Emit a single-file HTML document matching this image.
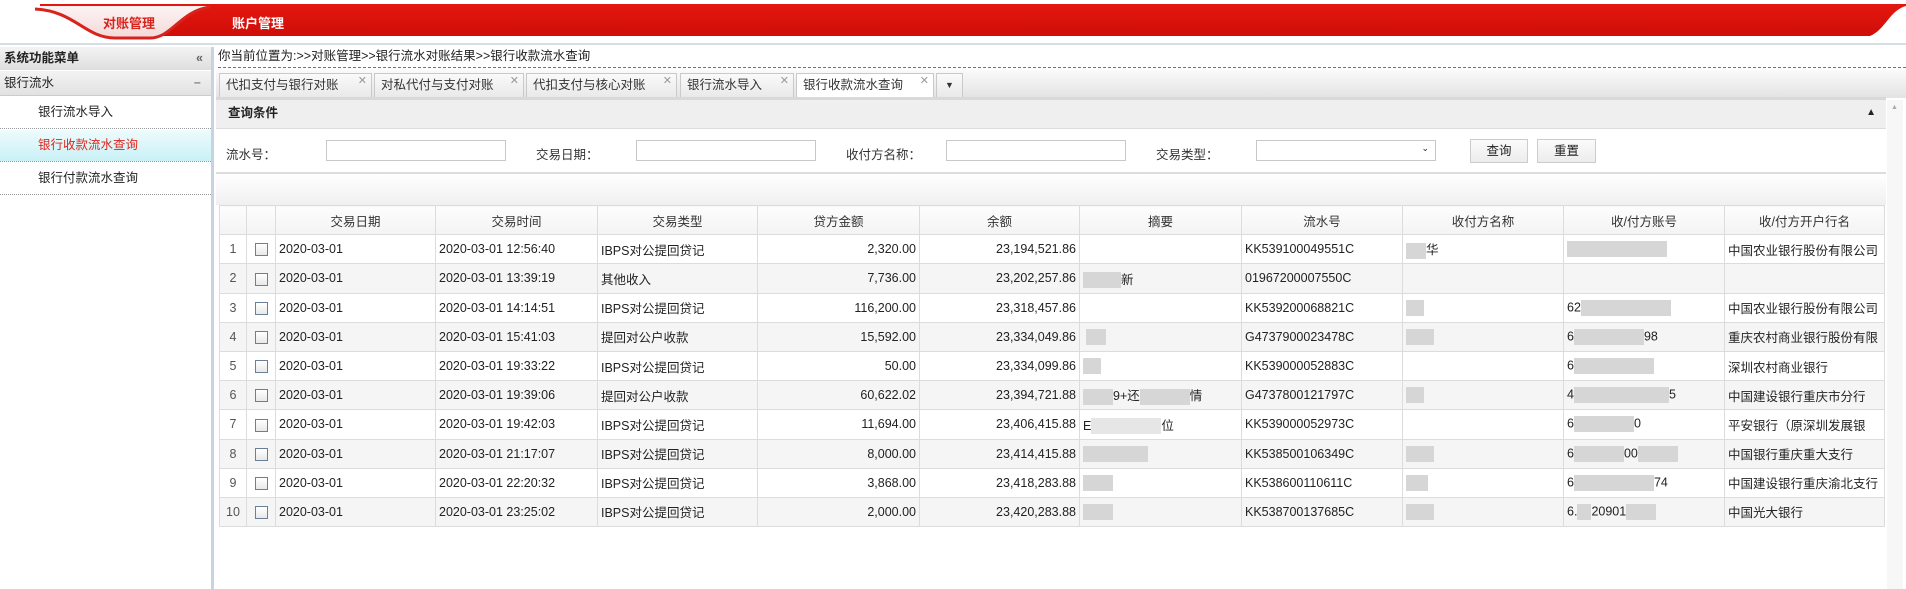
<!DOCTYPE html>
<html><head><meta charset="utf-8"><style>
*{margin:0;padding:0;box-sizing:border-box}
body{width:1906px;height:589px;overflow:hidden;background:#fff;font-family:"Liberation Sans","Noto Sans CJK SC",sans-serif;font-size:13px;color:#222;position:relative}
.a{position:absolute}
.tab{position:absolute;top:0;height:24px;border:1px solid #c9c9c9;border-bottom:none;background:linear-gradient(#fafafa,#e9e9e9);font-size:12.5px;line-height:22px;padding-left:6px;color:#333}
.tab .x{position:absolute;right:4px;top:-4px;color:#999;font-size:11px}
.inp{position:absolute;top:140px;height:21px;border:1px solid #c8c8c8;background:#fff}
.lbl{position:absolute;top:144px;font-size:12.5px;color:#333}
.btn{position:absolute;top:139px;height:24px;border:1px solid #ccc;background:linear-gradient(#fbfbfb,#ececec);font-size:12.5px;text-align:center;line-height:22px}
table{position:absolute;left:219px;top:205px;border-collapse:collapse;table-layout:fixed;width:1665px}
td,th{border:1px solid #dcdcdc;height:29.2px;font-size:12.5px;padding:0 3px;white-space:nowrap;overflow:hidden}
th{font-weight:normal;background:linear-gradient(#fdfdfd,#f3f3f3);text-align:center;color:#333}
tr:nth-child(odd) td{background:#f5f5f5}
td.n{text-align:center;color:#555}
td.r{text-align:right}
.cb{display:inline-block;width:13px;height:13px;border:1px solid #6b7f99;background:linear-gradient(#fff,#e8e8e8);vertical-align:middle}
.bl{display:inline-block;height:16px;background:#d6d6d6;vertical-align:middle}
</style></head><body>
<svg class="a" style="left:0;top:0" width="1906" height="46">
<defs><linearGradient id="g" x1="0" y1="0" x2="0" y2="1"><stop offset="0" stop-color="#e3180f"/><stop offset="1" stop-color="#d00d08"/></linearGradient>
<linearGradient id="t" x1="0" y1="0" x2="0" y2="1"><stop offset="0" stop-color="#fdf3f3"/><stop offset="1" stop-color="#f3d9d9"/></linearGradient></defs>
<path d="M30 4 H1906 V6 C1890 10 1885 30 1870 36 H150 Z" fill="url(#g)"/>
<path d="M0 0 H40 V10 C75 10 85 38 115 38 H150 V46 H0 Z" fill="#fff"/>
<path d="M38 10 C75 12 85 38 115 38 H150 C172 38 180 12 210 8 L210 6 H40 Z" fill="url(#t)"/>
<path d="M35 9 C75 11 85 38 115 38 H150 C172 38 180 11 210 7" stroke="#d8231d" stroke-width="3" fill="none"/>
</svg>
<div class="a" style="left:103px;top:13px;font-size:13px;font-weight:bold;color:#d9221c">对账管理</div>
<div class="a" style="left:232px;top:13px;font-size:13px;font-weight:bold;color:#fff">账户管理</div>
<div class="a" style="left:0;top:43px;width:1906px;height:2px;background:#d5dde5"></div>
<!-- sidebar -->
<div class="a" style="left:0;top:47px;width:214px;height:542px;border-right:3px solid #c7d3e0;background:#fff"></div>
<div class="a" style="left:0;top:47px;width:211px;height:23px;background:linear-gradient(#f3f3f3,#dedede);font-weight:bold;font-size:12.5px;line-height:23px;padding-left:4px">系统功能菜单<span style="position:absolute;right:8px;color:#666">«</span></div>
<div class="a" style="left:0;top:71px;width:211px;height:25px;background:linear-gradient(#f3f3f3,#e2e2e2);font-size:12.5px;line-height:25px;padding-left:4px;border-bottom:1px solid #ccc">银行流水<span style="position:absolute;right:10px;color:#555">−</span></div>
<div class="a" style="left:0;top:97px;width:211px;height:32px;border-bottom:1px dotted #999;line-height:31px;padding-left:38px;font-size:12.5px">银行流水导入</div>
<div class="a" style="left:0;top:130px;width:211px;height:32px;border-bottom:1px dotted #999;line-height:31px;padding-left:38px;font-size:12.5px;color:#e0261f;background:linear-gradient(#eefbfd,#c9f1f6)">银行收款流水查询</div>
<div class="a" style="left:0;top:163px;width:211px;height:32px;border-bottom:1px dotted #999;line-height:31px;padding-left:38px;font-size:12.5px">银行付款流水查询</div>
<!-- main -->
<div class="a" style="left:218px;top:47px;font-size:12.5px;line-height:18px">你当前位置为:&gt;&gt;对账管理&gt;&gt;银行流水对账结果&gt;&gt;银行收款流水查询</div>
<div class="a" style="left:218px;top:67px;width:1688px;border-top:1px dashed #557a99"></div>
<div class="a" style="left:216px;top:70px;width:1690px;height:28px;background:linear-gradient(#fafafa,#e3e3e3)"></div>
<div class="tab" style="left:219px;width:153px;top:73px">代扣支付与银行对账<span class="x">✕</span></div>
<div class="tab" style="left:374px;width:150px;top:73px">对私代付与支付对账<span class="x">✕</span></div>
<div class="tab" style="left:526px;width:151px;top:73px">代扣支付与核心对账<span class="x">✕</span></div>
<div class="tab" style="left:680px;width:114px;top:73px">银行流水导入<span class="x">✕</span></div>
<div class="tab" style="left:796px;width:138px;top:73px;background:#fff">银行收款流水查询<span class="x">✕</span></div>
<div class="tab" style="left:936px;width:27px;top:73px;font-size:9px;text-align:center;padding:0">▼</div>
<div class="a" style="left:216px;top:97px;width:1670px;height:3px;background:#d9d9d9"></div>
<div class="a" style="left:216px;top:100px;width:1670px;height:29px;background:#efefef;border-bottom:1px solid #ddd;font-weight:bold;font-size:12.5px;line-height:26px;padding-left:12px">查询条件<span style="position:absolute;right:10px;font-size:10px">▲</span></div>
<div class="a" style="left:1887px;top:100px;width:16px;height:489px;background:#f7f7f7"><span style="position:absolute;left:4px;top:4px;font-size:7px;color:#aaa">▲</span></div>
<div class="lbl" style="left:226px">流水号：</div><div class="inp" style="left:326px;width:180px"></div>
<div class="lbl" style="left:536px">交易日期：</div><div class="inp" style="left:636px;width:180px"></div>
<div class="lbl" style="left:846px">收付方名称：</div><div class="inp" style="left:946px;width:180px"></div>
<div class="lbl" style="left:1156px">交易类型：</div><div class="inp" style="left:1256px;width:180px"><span style="position:absolute;right:6px;top:2px;font-size:9px">⌄</span></div>
<div class="btn" style="left:1470px;width:58px">查询</div>
<div class="btn" style="left:1537px;width:59px">重置</div>
<div class="a" style="left:216px;top:172px;width:1670px;height:2px;background:#ddd"></div>
<div class="a" style="left:216px;top:174px;width:1670px;height:31px;background:linear-gradient(#fff,#f0f0f0)"></div>
<table>
<colgroup><col style="width:27px"><col style="width:29px"><col style="width:160px"><col style="width:162px"><col style="width:160px"><col style="width:162px"><col style="width:160px"><col style="width:162px"><col style="width:161px"><col style="width:161px"><col style="width:161px"><col style="width:160px"></colgroup>
<tr><th></th><th></th><th>交易日期</th><th>交易时间</th><th>交易类型</th><th>贷方金额</th><th>余额</th><th>摘要</th><th>流水号</th><th>收付方名称</th><th>收/付方账号</th><th>收/付方开户行名</th></tr>
<tr><td class="n">1</td><td class="n"><span class="cb"></span></td><td>2020-03-01</td><td>2020-03-01 12:56:40</td><td>IBPS对公提回贷记</td><td class="r">2,320.00</td><td class="r">23,194,521.86</td><td></td><td>KK539100049551C</td><td><span class="bl" style="width:20px"></span>华</td><td><span class="bl" style="width:100px"></span></td><td>中国农业银行股份有限公司</td></tr>
<tr><td class="n">2</td><td class="n"><span class="cb"></span></td><td>2020-03-01</td><td>2020-03-01 13:39:19</td><td>其他收入</td><td class="r">7,736.00</td><td class="r">23,202,257.86</td><td><span class="bl" style="width:38px"></span>新</td><td>01967200007550C</td><td></td><td></td><td></td></tr>
<tr><td class="n">3</td><td class="n"><span class="cb"></span></td><td>2020-03-01</td><td>2020-03-01 14:14:51</td><td>IBPS对公提回贷记</td><td class="r">116,200.00</td><td class="r">23,318,457.86</td><td></td><td>KK539200068821C</td><td><span class="bl" style="width:18px"></span></td><td>62<span class="bl" style="width:90px"></span></td><td>中国农业银行股份有限公司</td></tr>
<tr><td class="n">4</td><td class="n"><span class="cb"></span></td><td>2020-03-01</td><td>2020-03-01 15:41:03</td><td>提回对公户收款</td><td class="r">15,592.00</td><td class="r">23,334,049.86</td><td>&nbsp;<span class="bl" style="width:20px"></span></td><td>G4737900023478C</td><td><span class="bl" style="width:28px"></span></td><td>6<span class="bl" style="width:70px"></span>98</td><td>重庆农村商业银行股份有限</td></tr>
<tr><td class="n">5</td><td class="n"><span class="cb"></span></td><td>2020-03-01</td><td>2020-03-01 19:33:22</td><td>IBPS对公提回贷记</td><td class="r">50.00</td><td class="r">23,334,099.86</td><td><span class="bl" style="width:18px"></span></td><td>KK539000052883C</td><td></td><td>6<span class="bl" style="width:80px"></span></td><td>深圳农村商业银行</td></tr>
<tr><td class="n">6</td><td class="n"><span class="cb"></span></td><td>2020-03-01</td><td>2020-03-01 19:39:06</td><td>提回对公户收款</td><td class="r">60,622.02</td><td class="r">23,394,721.88</td><td><span class="bl" style="width:30px"></span>9+还<span class="bl" style="width:50px"></span>情</td><td>G4737800121797C</td><td><span class="bl" style="width:18px"></span></td><td>4<span class="bl" style="width:95px"></span>5</td><td>中国建设银行重庆市分行</td></tr>
<tr><td class="n">7</td><td class="n"><span class="cb"></span></td><td>2020-03-01</td><td>2020-03-01 19:42:03</td><td>IBPS对公提回贷记</td><td class="r">11,694.00</td><td class="r">23,406,415.88</td><td>E<span class="bl" style="width:70px;background:#e6e6e6"></span>位</td><td>KK539000052973C</td><td></td><td>6<span class="bl" style="width:60px"></span>0</td><td>平安银行（原深圳发展银</td></tr>
<tr><td class="n">8</td><td class="n"><span class="cb"></span></td><td>2020-03-01</td><td>2020-03-01 21:17:07</td><td>IBPS对公提回贷记</td><td class="r">8,000.00</td><td class="r">23,414,415.88</td><td><span class="bl" style="width:65px"></span></td><td>KK538500106349C</td><td><span class="bl" style="width:28px"></span></td><td>6<span class="bl" style="width:50px"></span>00<span class="bl" style="width:40px"></span></td><td>中国银行重庆重大支行</td></tr>
<tr><td class="n">9</td><td class="n"><span class="cb"></span></td><td>2020-03-01</td><td>2020-03-01 22:20:32</td><td>IBPS对公提回贷记</td><td class="r">3,868.00</td><td class="r">23,418,283.88</td><td><span class="bl" style="width:30px"></span></td><td>KK538600110611C</td><td><span class="bl" style="width:22px"></span></td><td>6<span class="bl" style="width:80px"></span>74</td><td>中国建设银行重庆渝北支行</td></tr>
<tr><td class="n">10</td><td class="n"><span class="cb"></span></td><td>2020-03-01</td><td>2020-03-01 23:25:02</td><td>IBPS对公提回贷记</td><td class="r">2,000.00</td><td class="r">23,420,283.88</td><td><span class="bl" style="width:30px"></span></td><td>KK538700137685C</td><td><span class="bl" style="width:28px"></span></td><td>6.<span class="bl" style="width:14px"></span>20901<span class="bl" style="width:30px"></span></td><td>中国光大银行</td></tr>
</table>
</body></html>
